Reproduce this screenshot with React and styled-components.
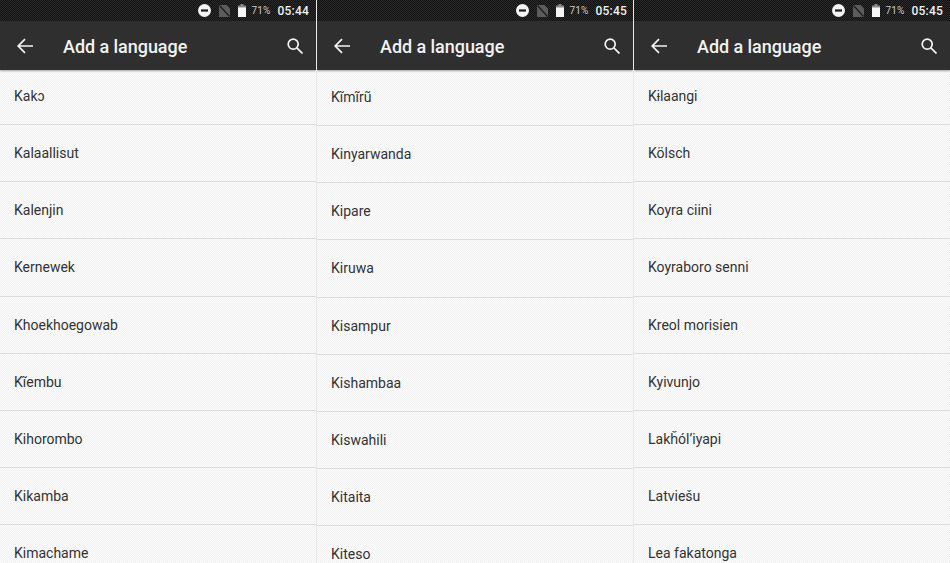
import React from 'react'
import styled, { createGlobalStyle } from 'styled-components'

const GlobalStyle = createGlobalStyle`
  html, body {
    margin: 0;
    padding: 0;
    background: #f7f7f7;
  }
  body {
    width: 950px;
    height: 563px;
    overflow: hidden;
    font-family: Roboto, "Liberation Sans", sans-serif;
  }
`

const Screens = styled.div`
  display: grid;
  grid-template-columns: 316px 317px 317px;
  width: 950px;
  height: 563px;
  overflow: hidden;
`

const Phone = styled.section`
  display: flex;
  flex-direction: column;
  height: 563px;
  overflow: hidden;
  background-color: #f7f7f7;
  background-image: repeating-conic-gradient(#f2f2f2 0 25%, #fbfbfb 0 50%);
  background-size: 2px 2px;
  border-left: ${props => (props.divided ? '1px solid #e8e8e8' : 'none')};
`

const StatusBar = styled.div`
  display: flex;
  align-items: center;
  justify-content: flex-end;
  flex: none;
  height: 21px;
  padding-right: ${props => props.inset}px;
  color: #f2f2f2;
  background-color: #1b1b1b;
  background-image: repeating-conic-gradient(#111 0 25%, #2b2b2b 0 50%);
  background-size: 2px 2px;
`

const StatusIcon = styled.svg`
  display: block;
  flex: none;
  margin-right: ${props => props.gap}px;
`

const Battery = styled.span`
  font-size: 10px;
  letter-spacing: 0.2px;
  color: #c9c9c9;
  margin-right: 7px;
`

const Clock = styled.span`
  font-size: 12px;
  font-weight: 500;
  letter-spacing: 0.2px;
  color: #f0f0f0;
`

const AppBar = styled.header`
  display: flex;
  align-items: center;
  flex: none;
  height: 49px;
  padding: 0 13px 0 17px;
  background: #2f2f2f;
  box-shadow: 0 1px 2px rgba(0, 0, 0, 0.35);
  position: relative;
  color: #f4f4f4;
`

const Title = styled.h1`
  flex: 1;
  margin: 2px 0 0 30px;
  font-size: 18px;
  font-weight: 500;
  letter-spacing: -0.05px;
  color: #f2f2f2;
`

const IconSvg = styled.svg`
  display: block;
  flex: none;
`

const LangList = styled.ul`
  list-style: none;
  margin: ${props => props.offset}px 0 0;
  padding: 0;
`

const LangRow = styled.li`
  box-sizing: border-box;
  display: flex;
  align-items: center;
  height: 57.15px;
  padding-left: 14px;
  font-size: 14px;
  color: #333;
  border-bottom: 1px solid #dcdcdc;
`

const screens = [
  {
    time: '05:44',
    inset: 7,
    offset: -2,
    languages: ['Kakɔ', 'Kalaallisut', 'Kalenjin', 'Kernewek', 'Khoekhoegowab', 'Kĩembu', 'Kihorombo', 'Kikamba', 'Kimachame'],
  },
  {
    time: '05:45',
    inset: 6,
    offset: -1,
    languages: ['Kĩmĩrũ', 'Kinyarwanda', 'Kipare', 'Kiruwa', 'Kisampur', 'Kishambaa', 'Kiswahili', 'Kitaita', 'Kiteso'],
  },
  {
    time: '05:45',
    inset: 7,
    offset: -2,
    languages: ['Kɨlaangi', 'Kölsch', 'Koyra ciini', 'Koyraboro senni', 'Kreol morisien', 'Kyivunjo', 'Lakȟól’iyapi', 'Latviešu', 'Lea fakatonga'],
  },
]

const DndIcon = () => (
  <StatusIcon width="13" height="13" viewBox="0 0 13 13" gap={8}>
    <circle cx="6.5" cy="6.5" r="6.5" fill="#f4f4f4" />
    <rect x="3" y="5.4" width="7" height="2.2" fill="#1b1b1b" />
  </StatusIcon>
)

const NoSimIcon = () => (
  <StatusIcon width="11" height="12" viewBox="0 0 11 12" gap={8}>
    <path d="M0 0h7.5L11 3.5V12H0z" fill="#5c5c5c" />
    <path d="M0.5 0.5L10.5 11.5" stroke="#1b1b1b" strokeWidth="1.2" />
  </StatusIcon>
)

const BatteryIcon = () => (
  <StatusIcon width="8" height="13" viewBox="0 0 8 13" gap={5}>
    <path d="M2.5 0h3v1.5H8V13H0V1.5h2.5z" fill="#8a8a8a" />
    <rect y="3.5" width="8" height="9.5" fill="#f6f6f6" />
  </StatusIcon>
)

const BackIcon = () => (
  <IconSvg width="16" height="16" viewBox="0 0 16 16" fill="none" stroke="currentColor" strokeWidth="1.7">
    <path d="M16 8H1.5M8 1.2L1.2 8 8 14.8" />
  </IconSvg>
)

const SearchIcon = () => (
  <IconSvg width="16" height="16" viewBox="0 0 16 16" fill="none" stroke="currentColor" strokeWidth="1.7">
    <circle cx="6.2" cy="6.2" r="5" />
    <path d="M9.8 9.8L15.5 15.5" />
  </IconSvg>
)

const Screen = ({ time, inset, offset, languages, divided }) => (
  <Phone divided={divided}>
    <StatusBar inset={inset}>
      <DndIcon />
      <NoSimIcon />
      <BatteryIcon />
      <Battery>71%</Battery>
      <Clock>{time}</Clock>
    </StatusBar>
    <AppBar>
      <BackIcon />
      <Title>Add a language</Title>
      <SearchIcon />
    </AppBar>
    <LangList offset={offset}>
      {languages.map(name => (
        <LangRow key={name}>{name}</LangRow>
      ))}
    </LangList>
  </Phone>
)

export default function App() {
  return (
    <>
      <GlobalStyle />
      <Screens>
        {screens.map((screen, index) => (
          <Screen key={index} divided={index > 0} {...screen} />
        ))}
      </Screens>
    </>
  )
}
